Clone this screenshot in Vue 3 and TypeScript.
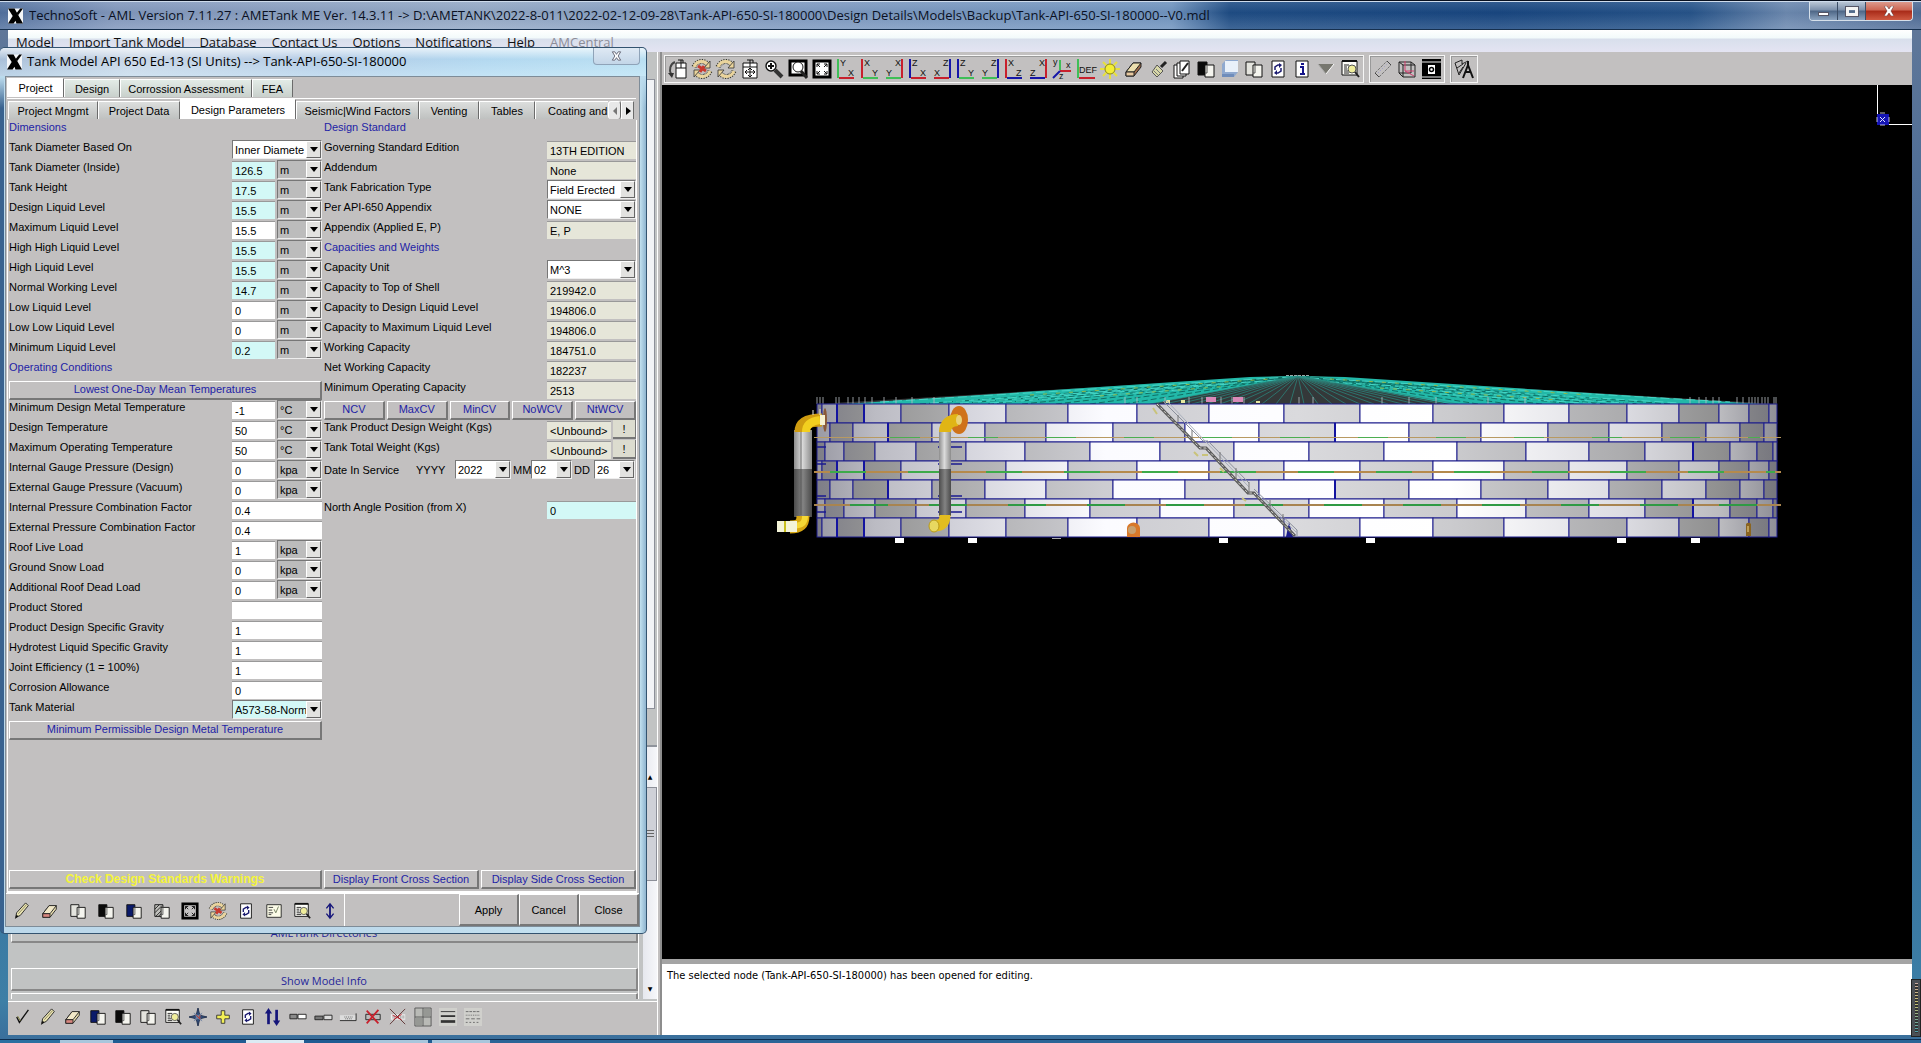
<script setup lang="ts">
interface Field {
  label: string
  value?: string
  kind: 'head' | 'unit' | 'text' | 'select' | 'button' | 'readonly' | 'unbound' | 'cv' | 'date' | 'gap'
  unit?: string
  tone?: 'aqua' | 'white'
}

const menu = ['Model', 'Import Tank Model', 'Database', 'Contact Us', 'Options', 'Notifications', 'Help']
const mainTabs = [
  { name: 'Project', w: 57 },
  { name: 'Design', w: 56 },
  { name: 'Corrossion Assessment', w: 132 },
  { name: 'FEA', w: 41 },
]
const subTabs = [
  { name: 'Project Mngmt', w: 90 },
  { name: 'Project Data', w: 82 },
  { name: 'Design Parameters', w: 116 },
  { name: 'Seismic|Wind Factors', w: 123 },
  { name: 'Venting', w: 60 },
  { name: 'Tables', w: 56 },
]

const unit = (label: string, value: string, u: string, tone: 'aqua' | 'white' = 'white'): Field => ({ label, value, kind: 'unit', unit: u, tone })
const text = (label: string, value: string, tone: 'aqua' | 'white' = 'white'): Field => ({ label, value, kind: 'text', tone })
const ro = (label: string, value: string): Field => ({ label, value, kind: 'readonly' })

const leftFields: Field[] = [
  { label: 'Dimensions', kind: 'head' },
  { label: 'Tank Diameter Based On', kind: 'select', value: 'Inner Diamete' },
  unit('Tank Diameter (Inside)', '126.5', 'm', 'aqua'),
  unit('Tank Height', '17.5', 'm', 'aqua'),
  unit('Design Liquid Level', '15.5', 'm', 'aqua'),
  unit('Maximum Liquid Level', '15.5', 'm'),
  unit('High High Liquid Level', '15.5', 'm', 'aqua'),
  unit('High Liquid Level', '15.5', 'm', 'aqua'),
  unit('Normal Working Level', '14.7', 'm', 'aqua'),
  unit('Low Liquid Level', '0', 'm'),
  unit('Low Low Liquid Level', '0', 'm'),
  unit('Minimum Liquid Level', '0.2', 'm', 'aqua'),
  { label: 'Operating Conditions', kind: 'head' },
  { label: 'Lowest One-Day Mean Temperatures', kind: 'button' },
  unit('Minimum Design Metal Temperature', '-1', '°C'),
  unit('Design Temperature', '50', '°C'),
  unit('Maximum Operating Temperature', '50', '°C'),
  unit('Internal Gauge Pressure (Design)', '0', 'kpa'),
  unit('External Gauge Pressure (Vacuum)', '0', 'kpa'),
  text('Internal Pressure Combination Factor', '0.4'),
  text('External Pressure Combination Factor', '0.4'),
  unit('Roof Live Load', '1', 'kpa'),
  unit('Ground Snow Load', '0', 'kpa'),
  unit('Additional Roof Dead Load', '0', 'kpa'),
  text('Product Stored', ''),
  text('Product Design Specific Gravity', '1'),
  text('Hydrotest Liquid Specific Gravity', '1'),
  text('Joint Efficiency (1 = 100%)', '1'),
  text('Corrosion Allowance', '0'),
  { label: 'Tank Material', kind: 'select', value: 'A573-58-Norm', tone: 'aqua' },
  { label: 'Minimum Permissible Design Metal Temperature', kind: 'button' },
]

const rightFields: Field[] = [
  { label: 'Design Standard', kind: 'head' },
  ro('Governing Standard Edition', '13TH EDITION'),
  ro('Addendum', 'None'),
  { label: 'Tank Fabrication Type', kind: 'select', value: 'Field Erected' },
  { label: 'Per API-650 Appendix', kind: 'select', value: 'NONE' },
  ro('Appendix (Applied E, P)', 'E, P'),
  { label: 'Capacities and Weights', kind: 'head' },
  { label: 'Capacity Unit', kind: 'select', value: 'M^3' },
  ro('Capacity to Top of Shell', '219942.0'),
  ro('Capacity to Design Liquid Level', '194806.0'),
  ro('Capacity to Maximum Liquid Level', '194806.0'),
  ro('Working Capacity', '184751.0'),
  ro('Net Working Capacity', '182237'),
  ro('Minimum Operating Capacity', '2513'),
  { label: 'cv', kind: 'cv' },
  { label: 'Tank Product Design Weight (Kgs)', kind: 'unbound' },
  { label: 'Tank Total Weight (Kgs)', kind: 'unbound' },
  { label: 'Date In Service', kind: 'date' },
  { label: 'gap', kind: 'gap' },
  text('North Angle Position (from X)', '0', 'aqua'),
]
const cvButtons = ['NCV', 'MaxCV', 'MinCV', 'NoWCV', 'NtWCV']

// ---- toolbar icons, drawn on a 20 x 20 grid ----
const R = '#c8202c'
const G = '#3fbf57'
const B = '#1616a8'
const glyph = (x: number, y: number, s: string, size = 9) =>
  `<text x="${x}" y="${y}" font-family="Liberation Sans, sans-serif" font-size="${size}" fill="#111">${s}</text>`
const axes = (v: string, h: string, top: string, bottom: string, mirror = false) =>
  mirror
    ? `<path d="M18 0V19" stroke="${v}" stroke-width="2"/><path d="M2 19H17" stroke="${h}" stroke-width="2"/>${glyph(11, 7, top)}${glyph(2, 17, bottom)}`
    : `<path d="M2 0V19" stroke="${v}" stroke-width="2"/><path d="M3 19H18" stroke="${h}" stroke-width="2"/>${glyph(4, 7, top)}${glyph(12, 17, bottom)}`
const pages = (back: string) =>
  `<path d="M2 3H11V16H2Z" fill="${back}" stroke="#111"/><path d="M9 6H18V18H9Z" fill="#f4f4ee" stroke="#111"/><path d="M11 6V14H9" fill="none" stroke="#555"/>`
const swirl = (mid: string) =>
  `<g fill="none" stroke="#3a3a2c" stroke-width="5" stroke-dasharray="1 1"><path d="M2 8C5 1 13 1 16 6"/><path d="M18 12C15 19 7 19 4 14"/></g><g fill="none" stroke="#ead49c" stroke-width="3"><path d="M2 8C5 1 13 1 16 6"/><path d="M18 12C15 19 7 19 4 14"/></g><path d="M18 2V9H12Z" fill="#ead49c" stroke="#333" stroke-width="0.8"/><path d="M2 18V11H8Z" fill="#ead49c" stroke="#333" stroke-width="0.8"/>${mid}`
const mouse = '<path d="M8 4H18V19H8Z" fill="#fff" stroke="#111"/><path d="M8 9H18M13 4V9M13 1V4M10 1H15V4" fill="none" stroke="#111"/>'
const arrows4 = '<path d="M5 8V5H8M5 5L8 8M15 8V5H12M15 5L12 8M5 12V15H8M5 15L8 12M15 12V15H12M15 15L12 12" fill="none" stroke="#111"/>'
const frame = (fill: string) => `<path d="M2 2H18V18H2Z" fill="${fill}" stroke="#000" stroke-width="3"/>${arrows4}`
const sheet = '<path d="M4 2H16V18H4Z" fill="#fff" stroke="#111"/>'

const icons: Record<string, string> = {
  mouseRotate: `${mouse}<path d="M7 3C2 5 1 11 3 15" fill="none" stroke="#444" stroke-width="2"/><path d="M0 14H6L4 19Z" fill="#333"/>`,
  swirlRed: swirl('<path d="M6 7L14 12M12 7L8 13" stroke="#c8392f" stroke-width="3"/>'),
  swirl: swirl(''),
  mousePan: '<path d="M3 4H17V19H3Z" fill="#fff" stroke="#111"/><path d="M3 8H17M10 4V8M10 1V4M7 1H13V4M10 9V18M5 13H15M8 11L10 9L12 11M8 16L10 18L12 16M7 11L5 13L7 15M13 11L15 13L13 15" fill="none" stroke="#111"/>',
  zoomIn: '<path d="M11 11L18 18" stroke="#333" stroke-width="4"/><circle cx="7" cy="7" r="5" fill="#fff" stroke="#111" stroke-width="1.4"/><path d="M4 7H10M7 4V10" stroke="#111" stroke-width="2"/>',
  zoomWin: '<path d="M2 2H18V16H2Z" fill="#fff" stroke="#000" stroke-width="3"/><circle cx="10" cy="8" r="5" fill="#fff" stroke="#111"/><path d="M13 12L19 19" stroke="#222" stroke-width="3"/>',
  fit: frame('#fff'),
  fitGrey: frame('#c4c2c2'),
  yx: axes(G, R, 'Y', 'X'),
  xy: axes(R, G, 'X', 'Y'),
  xyM: axes(R, G, 'X', 'Y', true),
  zx: axes(B, R, 'Z', 'X'),
  zxM: axes(B, R, 'Z', 'X', true),
  zy: axes(B, G, 'Z', 'Y'),
  zyM: axes(B, G, 'Z', 'Y', true),
  xz: axes(R, B, 'X', 'Z'),
  xzM: axes(R, B, 'X', 'Z', true),
  iso: `<path d="M8 1V11" stroke="${G}" stroke-width="2"/><path d="M8 12H19" stroke="${R}" stroke-width="2"/><path d="M8 12L1 19" stroke="${B}" stroke-width="2"/>${glyph(1, 6, 'y')}${glyph(14, 9, 'x')}${glyph(7, 20, 'z')}`,
  def: `<path d="M2 0V19" stroke="${G}" stroke-width="2"/><path d="M3 19H19" stroke="${R}" stroke-width="2"/>${glyph(3, 14, 'DEF', 9)}`,
  sun: '<path d="M10 0V20M0 10H20M3 3L17 17M17 3L3 17" stroke="#e6e040" stroke-width="2"/><circle cx="10" cy="10" r="5" fill="#f4ee35" stroke="#8a8420"/>',
  eraser: '<path d="M2 13L9 4H17V8L10 17H2Z" fill="#e6dcae" stroke="#222"/><path d="M9 4L17 4L10 13H2Z" fill="#f1e8c8" stroke="#222"/><path d="M2 13H10V17H2Z" fill="#d98880" stroke="#222"/>',
  eraserTan: '<path d="M2 13L9 4H17V8L10 17H2Z" fill="#a06c4a" stroke="#222"/><path d="M9 4L17 4L10 13H2Z" fill="#ecdfae" stroke="#222"/><path d="M2 13H10V17H2Z" fill="#e8c9a0" stroke="#222"/>',
  brush: '<path d="M18 3L13 8" stroke="#222" stroke-width="3"/><path d="M9 6L15 12L9 18L4 13Z" fill="#d8d8a8" stroke="#555"/><path d="M8 10L12 14M6 12L10 16" stroke="#777"/>',
  copies: '<path d="M2 6H11V19H2Z" fill="#fff" stroke="#111"/><path d="M5 4H14V17H5Z" fill="#fff" stroke="#111"/><path d="M8 2H17V15H8Z" fill="#fff" stroke="#111"/><path d="M16 4L10 12" stroke="#222" stroke-width="2"/>',
  pagesBlack: pages('#0a0a0a'),
  pagesBlue: pages('#0a1a6a'),
  pagesWhite: pages('#e4e4de'),
  pagesHatch: pages('#c0c0bc') + '<path d="M2 8L7 3M2 12L10 4M3 16L9 10M6 16L9 13" stroke="#222"/>',
  cube: '<path d="M2 5L6 1H18V13L14 18H2Z" fill="#8fa9cf"/><path d="M5 2H18V13H5Z" fill="#e9f1fa"/><path d="M2 15H14V18H2Z" fill="#6f8dbb"/>',
  refresh: `${sheet}<path d="M7 11V8L10 6H12M13 9V12L10 14H8" fill="none" stroke="#1a1a70" stroke-width="1.5"/><path d="M11 4L14 6L11 9ZM9 11L6 14L9 16Z" fill="#1a1a70"/>`,
  info: `${sheet}<path d="M8 8H11V15M8 15H13" fill="none" stroke="#14148a" stroke-width="2"/><path d="M9 4H12V6H9Z" fill="#14148a"/>`,
  tri: '<path d="M2 5H18L10 15Z" fill="#77776f"/><path d="M18 5L10 15" stroke="#fff"/><path d="M2 5L10 15" stroke="#aaa"/>',
  find: '<path d="M2 2H17V16H2Z" fill="#fdfdf8" stroke="#111"/><path d="M2 2H17" stroke="#111" stroke-width="2"/><path d="M4 6H9M4 8H7M4 10H7M4 12H8M4 14H9" stroke="#222"/><circle cx="12" cy="10" r="4" fill="#f0ee9c" stroke="#555"/><path d="M15 13L19 18" stroke="#222" stroke-width="2"/>',
  measure: '<path d="M2 14L14 2M6 18L18 6" stroke="#777" stroke-dasharray="3 1"/><path d="M2 14L6 18M14 2L18 6" stroke="#444"/><path d="M5 14L15 4" stroke="#9a9ac8" stroke-dasharray="1 2"/>',
  wire: '<path d="M2 3L6 6M14 3L18 6M2 14L6 18" stroke="#222"/><path d="M2 3H14V14H2Z" fill="none" stroke="#222"/><path d="M6 6H18V18H6Z" fill="none" stroke="#222"/><path d="M8 2V12H17M8 12L17 17" fill="none" stroke="#d04070"/>',
  camera: '<path d="M1 0H20V20H1Z" fill="#000"/><path d="M1 3H20M1 18H20" stroke="#eee"/><path d="M7 6H14V15H7Z" fill="#fff"/><circle cx="10.500" cy="10.500" r="2" fill="#fff" stroke="#000" stroke-width="1.5"/>',
  compass: '<path d="M1 4L8 1V5L14 2M1 4L5 16L12 4M3 9L9 5M5 14L9 8" fill="none" stroke="#222"/><path d="M14 2V6M14 6L9 19M14 6L19 19M11 13H17" fill="none" stroke="#111" stroke-width="2"/>',
  pencil: '<path d="M3 17L4 12L14 1L17 4L8 15Z" fill="#e9e3b0" stroke="#222"/><path d="M6 13L15 3" stroke="#8b8660"/><path d="M2 19L4 14L6 16Z" fill="#111"/>',
  check: '<path d="M3 10L6 16L16 2" fill="none" stroke="#111" stroke-width="1.500"/><path d="M4 9L7 14" stroke="#7a7a30"/>',
  script: '<path d="M2 3H18V17H2Z" fill="#fcfce8" stroke="#222"/><path d="M4 6H9M4 9H8M4 12H9M4 14H7" stroke="#333"/><path d="M10 8L12 12L15 5" fill="none" stroke="#6d7a5a"/>',
  updown: '<path d="M10 3V17" stroke="#15157a" stroke-width="2"/><path d="M6 7L10 2L14 7M6 13L10 18L14 13" fill="none" stroke="#15157a" stroke-width="1.5"/>',
  star: '<path d="M10 0L12 8L20 10L12 12L10 20L8 12L0 10L8 8Z" fill="#33507e" stroke="#1c2a48"/><path d="M5 5L10 8L15 5L12 10L15 15L10 12L5 15L8 10Z" fill="#6d7fa0"/><path d="M8 8L12 12M12 8V12" stroke="#c0392b"/>',
  plus: '<path d="M8 3H12V8H17V12H12V17H8V12H3V8H8Z" fill="#f2ef56" stroke="#333"/>',
  swap: '<path d="M5 4V18" stroke="#15157a" stroke-width="3"/><path d="M1 6L5 0L9 6Z" fill="#15157a"/><path d="M14 2V15" stroke="#15157a" stroke-width="3"/><path d="M10 14L14 20L18 14Z" fill="#15157a"/>',
  barA: '<path d="M1 7H9V12H1Z" fill="#8a8a8a" stroke="#222"/><path d="M10 7H19V12H10Z" fill="#fff" stroke="#222"/>',
  barB: '<path d="M1 9H10V13H1Z" fill="#777" stroke="#222"/><path d="M11 8H20V13H11Z" fill="#ddd" stroke="#222"/>',
  barC: '<path d="M1 8H19V14H1Z" fill="#ddd"/><path d="M19 6V14H1" fill="none" stroke="#222"/><path d="M6 10H16M7 12H15" stroke="#555" stroke-dasharray="1 1"/>',
  barX: '<path d="M2 7H18V13H2Z" fill="#bbb" stroke="#222"/><path d="M3 3L16 17M16 2L3 17" stroke="#c8202c" stroke-width="2"/>',
  barXX: '<path d="M2 7H18V13H2Z" fill="#eee"/><path d="M4 9H17M4 11H17" stroke="#555" stroke-dasharray="1 1"/><path d="M1 1L18 18M18 1L1 18" stroke="#5a3030"/><path d="M4 8L14 13M14 7L5 13" stroke="#c8202c"/>',
  grid: '<path d="M1 0H19V20H1Z" fill="#b9bab6" stroke="#555"/><path d="M10 0V20M1 10H19" stroke="#555"/><path d="M11 1H18V9H11ZM2 11H9V19H2Z" fill="#969894"/>',
  lines: '<path d="M0 0H20V20H0Z" fill="#d0d0cc"/><path d="M2 4H18" stroke="#333"/><path d="M2 9H18" stroke="#333" stroke-width="2"/><path d="M2 15H18" stroke="#333" stroke-width="3"/>',
  dashes: '<path d="M0 0H20V20H0Z" fill="#d0d0cc"/><path d="M2 4H18" stroke="#666" stroke-dasharray="3 1"/><path d="M2 8H18" stroke="#666" stroke-dasharray="1 1"/><path d="M2 12H18" stroke="#666" stroke-dasharray="4 2"/><path d="M2 16H18" stroke="#666" stroke-dasharray="2 2"/>',
}

const viewTools = ['mouseRotate', 'swirlRed', 'swirl', 'mousePan', 'zoomIn', 'zoomWin', 'fit', 'yx', 'xy', 'xyM', 'zx', 'zxM', 'zy', 'zyM', 'xz', 'xzM', 'iso', 'def', 'sun', 'eraserTan', 'brush', 'copies', 'pagesBlack', 'cube', 'pagesWhite', 'refresh', 'info', 'tri', 'find']
const viewTools2 = ['measure', 'wire', 'camera']
const dialogTools = ['pencil', 'eraser', 'pagesWhite', 'pagesBlack', 'pagesBlue', 'pagesHatch', 'fitGrey', 'swirlRed', 'refresh', 'script', 'find', 'updown']
const paneTools = ['check', 'pencil', 'eraser', 'pagesBlue', 'pagesBlack', 'pagesWhite', 'find', 'star', 'plus', 'refresh', 'swap', 'barA', 'barB', 'barC', 'barX', 'barXX', 'grid', 'lines', 'dashes']

// ---- tank model ----
const jointsA = [817, 822, 837, 864, 901, 949, 1006, 1068, 1137, 1209, 1284, 1360, 1433, 1504, 1569, 1627, 1679, 1719, 1749, 1769, 1777]
const jointsB = [817, 830, 853, 888, 932, 985, 1046, 1113, 1185, 1259, 1335, 1409, 1481, 1548, 1609, 1662, 1706, 1740, 1764, 1777]
const jointsC = [817, 825, 844, 875, 916, 966, 1025, 1090, 1160, 1234, 1309, 1384, 1457, 1526, 1589, 1645, 1693, 1730, 1757, 1773, 1777]
const courses: [number[], number][] = [[jointsA, 0], [jointsB, 1], [jointsC, 0], [jointsA, 1], [jointsB, 0], [jointsC, 1], [jointsA, 0]]
const plates = courses.flatMap(([j, parity], row) =>
  j.slice(0, -1).map((x, i) => ({ x, y: 404 + row * 19, w: j[i + 1] - x, fill: (i + parity) % 2 ? 'url(#plateLight)' : 'url(#plateDark)' })),
)
const roofRays = Array.from({ length: 23 }, (_, i) => 1150 + i * 14)
const roofRings = Array.from({ length: 7 }, (_, i) => i)
const posts = [817, 820, 823, 836, 839, 848, 853, 859, 865, 872, 884, 896, 912, 934, 1125, 1137, 1165, 1189, 1202, 1221, 1232, 1244, 1299, 1313, 1382, 1409, 1436, 1488, 1525, 1690, 1699, 1706, 1713, 1719, 1737, 1743, 1749, 1752, 1755, 1758, 1762, 1765, 1768, 1774, 1776]
const feet = [895, 968, 1219, 1366, 1617, 1691]
const rungs = [447, 464, 496, 512]
</script>

<template>
  <div class="desktop">
    <div class="app">
      <header class="titlebar">
        <svg class="logo" viewBox="0 0 16 16" aria-hidden="true"><path d="M0 0H16V16H0Z" fill="#f4f6f8" /><path d="M0 0H7L16 16H9L8 13L6 16H0L5 8Z" fill="#000" /><path d="M13 0H16L11 7L9 5Z" fill="#000" /></svg>
        <h1>TechnoSoft - AML Version 7.11.27 : AMETank ME Ver. 14.3.11 -&gt; D:\AMETANK\2022-8-011\2022-02-12-09-28\Tank-API-650-SI-180000\Design Details\Models\Backup\Tank-API-650-SI-180000--V0.mdl</h1>
        <div class="wincontrols">
          <button type="button" class="wc min" aria-label="Minimize"><i></i></button>
          <button type="button" class="wc max" aria-label="Maximize"><i></i></button>
          <button type="button" class="wc close" aria-label="Close window"><svg viewBox="0 0 10 10"><path d="M0 0H3L5 3L7 0H10L7 5L10 10H7L5 7L3 10H0L3 5Z" fill="#fff" stroke="#522" stroke-width="0.5" /></svg></button>
        </div>
      </header>

      <nav class="menubar">
        <a v-for="m in menu" :key="m" href="#">{{ m }}</a>
        <a href="#" class="off">AMCentral</a>
      </nav>

      <div class="body">
        <section class="pane">
          <div class="upper"><div class="track"></div></div>
          <div class="lower">
            <div class="list">
              <button type="button" class="wide">AMETank Directories</button>
              <button type="button" class="wide info">Show Model Info</button>
              <div class="stub"></div>
            </div>
            <div class="scroll">
              <span class="arr">▲</span>
              <div class="thumb"><i></i></div>
              <span class="arr down">▼</span>
            </div>
          </div>
          <div class="panetools">
            <button v-for="(n, i) in paneTools" :key="i" type="button" class="tool" :aria-label="n"><svg viewBox="0 0 20 20" v-html="icons[n]"></svg></button>
          </div>
        </section>

        <section class="work">
          <div class="toolbars">
            <div class="group">
              <button v-for="(n, i) in viewTools" :key="i" type="button" class="tool" :aria-label="n"><svg viewBox="0 0 20 20" v-html="icons[n]"></svg></button>
            </div>
            <div class="group">
              <button v-for="n in viewTools2" :key="n" type="button" class="tool" :aria-label="n"><svg viewBox="0 0 20 20" v-html="icons[n]"></svg></button>
            </div>
            <div class="group">
              <button type="button" class="tool" aria-label="compass"><svg viewBox="0 0 20 20" v-html="icons.compass"></svg></button>
            </div>
          </div>

          <div class="viewport">
            <svg class="model" viewBox="662 85 1250 874" role="img" aria-label="Tank model, side view">
              <defs>
                <linearGradient id="plateLight" gradientUnits="userSpaceOnUse" x1="817" y1="0" x2="1777" y2="0">
                  <stop offset="0" stop-color="#9a9aa4" /><stop offset="0.06" stop-color="#bbbbc3" /><stop offset="0.16" stop-color="#d6d6de" /><stop offset="0.3" stop-color="#fbfbff" /><stop offset="0.66" stop-color="#ffffff" /><stop offset="0.84" stop-color="#dcdce2" /><stop offset="0.94" stop-color="#bcbcc0" /><stop offset="1" stop-color="#8e8e96" />
                </linearGradient>
                <linearGradient id="plateDark" gradientUnits="userSpaceOnUse" x1="817" y1="0" x2="1777" y2="0">
                  <stop offset="0" stop-color="#7e7e88" /><stop offset="0.06" stop-color="#949494" /><stop offset="0.16" stop-color="#b0b0b2" /><stop offset="0.3" stop-color="#cdcdd2" /><stop offset="0.5" stop-color="#dadadd" /><stop offset="0.66" stop-color="#cbcbce" /><stop offset="0.84" stop-color="#acacae" /><stop offset="0.94" stop-color="#909090" /><stop offset="1" stop-color="#76767e" />
                </linearGradient>
                <linearGradient id="pipeUp"><stop offset="0" stop-color="#8d8d8d" /><stop offset="0.45" stop-color="#dcdcdc" /><stop offset="1" stop-color="#8b8b8b" /></linearGradient>
                <linearGradient id="pipeLow"><stop offset="0" stop-color="#4c4c4c" /><stop offset="0.5" stop-color="#838383" /><stop offset="1" stop-color="#4a4a4a" /></linearGradient>
              </defs>

              <polygon points="817,404 1284,376 1312,376 1777,404" fill="#343839" />
              <polygon points="845,404 1250,377 1298,376 1150,404" fill="#22b8a8" />
              <polygon points="1298,376 1345,377 1760,404 1450,404" fill="#22b8a8" />
              <g stroke="#0f6f64" stroke-width="1" fill="none">
                <path v-for="r in roofRings" :key="'l' + r" :d="`M${920 + r * 34} 404L1290 377`" stroke-dasharray="6 3" />
                <path v-for="r in roofRings" :key="'r' + r" :d="`M${1670 - r * 32} 404L1306 377`" stroke-dasharray="6 3" />
              </g>
              <g stroke="#45d6c6" fill="none">
                <path d="M880 402L1290 377M930 403L1280 380M960 403L1230 384M990 403L1180 390" stroke-dasharray="9 4" />
                <path d="M1310 378L1730 402M1330 382L1680 403M1390 388L1640 404M1440 394L1600 404" stroke-dasharray="9 4" />
              </g>
              <path d="M1030 395L1270 379M1330 379L1590 395M1100 396L1230 386M1380 388L1560 400" stroke="#8fb84a" stroke-dasharray="4 9" />
              <path v-for="x in roofRays" :key="x" :d="`M1298 376L${x} 404`" stroke="#2b8d82" stroke-width="0.7" />
              <path d="M1286 375.500H1310" stroke="#9aa" stroke-dasharray="3 1" />
              <path v-for="x in posts" :key="'p' + x" :d="`M${x} 397V404`" stroke="#b9bfc4" stroke-width="0.8" />
              <path d="M1206 397h10v5h-10zM1233 397h10v5h-10z" fill="#d98ab8" />
              <path d="M1166 400h4v3h-4zM1181 400h4v3h-4zM1256 401h4v2h-4z" fill="#e6e8a0" />

              <rect v-for="(p, i) in plates" :key="i" :x="p.x" :y="p.y" :width="p.w" height="19" :fill="p.fill" stroke="#1c1c8c" stroke-width="1" />
              <path d="M837 404V423M864 404V423M888 423V442M837 461V480M864 461V480M888 480V499M1335 423V442M1335 480V499M1693 442V461M1693 499V518M837 518V537M864 518V537" stroke="#1414a0" stroke-width="2" />
              <path d="M814 437.500H1781" stroke="#b89a62" /><path d="M890 437.500H1760" stroke="#4cae50" stroke-dasharray="30 48" />
              <path d="M814 472H1781" stroke="#b58a4c" stroke-width="2" /><path d="M830 472H1775" stroke="#3daa4a" stroke-width="2" stroke-dasharray="36 42" />
              <path d="M814 505H1781" stroke="#a88450" stroke-width="2" /><path d="M850 505H1775" stroke="#2f9a44" stroke-width="2" stroke-dasharray="38 41" />
              <path v-for="y in rungs" :key="y" :d="`M817 ${y}H826M938 ${y}H962`" stroke="#1a1a90" stroke-width="1.500" />

              <ellipse cx="825" cy="420" rx="2" ry="12" fill="#8a5a38" />
              <rect x="794" y="430" width="18" height="40" fill="url(#pipeUp)" />
              <rect x="794" y="469" width="18" height="48" fill="url(#pipeLow)" />
              <path d="M801 432C801 424 806 420 822 420" stroke="#cf9c10" stroke-width="13" fill="none" />
              <path d="M806 432C806 425 811 421 820 420" stroke="#f2cf1f" stroke-width="8" fill="none" />
              <path d="M803 516C803 524 800 527 790 527" stroke="#d8a712" stroke-width="13" fill="none" />
              <path d="M805 516C805 524 801 526 790 526" stroke="#f5d836" stroke-width="6" fill="none" />
              <path d="M777 521h20v11h-20z" fill="#f4f4d8" /><path d="M785 521V532" stroke="#c8c020" stroke-width="2" />
              <path d="M820 415h5v10h-5z" fill="#f7f2cf" /><path d="M813 410V415M820 409V415" stroke="#e8e8d8" />
              <path d="M801 432V515" stroke="#555" stroke-width="0.8" />

              <ellipse cx="959" cy="420" rx="9" ry="14" fill="#cf721a" />
              <rect x="939" y="430" width="12" height="40" fill="url(#pipeUp)" />
              <rect x="939" y="469" width="12" height="47" fill="url(#pipeLow)" />
              <path d="M945 432C945 424 950 420 958 420" stroke="#e0b515" stroke-width="12" fill="none" />
              <ellipse cx="959" cy="420" rx="3" ry="5" fill="#e9d27a" />
              <path d="M945 515C945 523 941 526 934 526" stroke="#e3bd20" stroke-width="11" fill="none" />
              <ellipse cx="934" cy="526" rx="5" ry="6" fill="#e8d860" stroke="#b89a18" />

              <path d="M1127 537V528A6 5 0 0 1 1140 528V537Z" fill="#d8782a" /><circle cx="1132" cy="530" r="4" fill="#c8a070" />
              <path d="M1746 524a3 3 0 0 1 5 0V536H1746Z" fill="#8a6420" /><path d="M1748 526V532" stroke="#f0d890" />
              <path d="M1286 537L1289 522L1293 537Z" fill="#1a1a8a" />

              <g fill="none">
                <path d="M1157 404L1200 448H1206L1248 493H1254L1295 536" stroke="#5c5c5c" stroke-width="3" />
                <path d="M1157 404L1200 448H1206L1248 493H1254L1295 536" stroke="#d5d5cf" stroke-width="1" stroke-dasharray="3 2" />
                <path d="M1163 401L1203 441H1208L1249 483M1254 489L1297 530V537" stroke="#8a8f9c" />
                <path d="M1166 400L1206 442L1249 487M1256 493L1297 533" stroke="#a9b0bc" />
                <path d="M1249 482V494M1178 415V422M1192 430V438M1220 452V463M1236 468V480M1270 500V510M1283 514V524" stroke="#777" />
                <path d="M1153 408l4 6M1194 452l4 4M1202 455l6 0M1220 468l4 4M1242 498l4 3" stroke="#c9c37a" stroke-width="2" />
              </g>
              <path v-for="x in feet" :key="'f' + x" :d="`M${x} 538h9v5h-9z`" fill="#fff" />
              <path d="M1052 538.500H1061" stroke="#aaa" />

              <path d="M1877.500 85V114M1889 124.500H1912" stroke="#fff" />
              <path d="M1877 114h12v11h-12z" fill="#1414b4" />
              <path d="M1880 117l5 5M1885 117l-5 5" stroke="#dfe4ff" /><path d="M1880 113h5M1880 125h5M1877 117v5M1889 117v5" stroke="#e8e8ff" stroke-width="0.8" />
            </svg>
          </div>
          <output class="log">The selected node (Tank-API-650-SI-180000) has been opened for editing.</output>
        </section>
      </div>
      <div class="meter" aria-hidden="true"><i></i></div>

      <form class="dialog" @submit.prevent>
        <header class="dtitle">
          <svg class="logo" viewBox="0 0 16 16" aria-hidden="true"><path d="M0 0H16V16H0Z" fill="#f4f6f8" /><path d="M0 0H7L16 16H9L8 13L6 16H0L5 8Z" fill="#000" /><path d="M13 0H16L11 7L9 5Z" fill="#000" /></svg>
          <h2>Tank Model API 650 Ed-13 (SI Units) --&gt; Tank-API-650-SI-180000</h2>
          <button type="button" class="dclose" aria-label="Close dialog"><svg viewBox="0 0 12 12"><path d="M1 1H4L6 4L8 1H11L8 6L11 11H8L6 8L4 11H1L4 6Z" fill="#fff" stroke="#556" /></svg></button>
        </header>

        <div class="dbody">
          <div class="tabs main">
            <button v-for="t in mainTabs" :key="t.name" type="button" :class="{ on: t.name === 'Project' }" :style="{ width: t.w + 'px' }">{{ t.name }}</button>
          </div>
          <div class="tabs sub">
            <button v-for="t in subTabs" :key="t.name" type="button" :class="{ on: t.name === 'Design Parameters' }" :style="{ width: t.w + 'px' }">{{ t.name }}</button>
            <button type="button" class="last">Coating and</button>
            <button type="button" class="spin dim" aria-label="Scroll tabs left"><svg viewBox="0 0 6 8"><path d="M5 0V8L1 4Z" fill="#777" /></svg></button>
            <button type="button" class="spin" aria-label="Scroll tabs right"><svg viewBox="0 0 6 8"><path d="M1 0V8L6 4Z" fill="#000" /></svg></button>
          </div>

          <div class="panel">
            <div class="cols">
              <div v-for="(list, c) in [leftFields, rightFields]" :key="c" class="col">
                <div v-for="(f, i) in list" :key="i" class="row">
                  <h3 v-if="f.kind === 'head'">{{ f.label }}</h3>
                  <button v-else-if="f.kind === 'button'" type="button" class="raised">{{ f.label }}</button>
                  <template v-else-if="f.kind === 'cv'">
                    <button v-for="b in cvButtons" :key="b" type="button" class="raised">{{ b }}</button>
                  </template>
                  <template v-else-if="f.kind === 'date'">
                    <span class="dl service">{{ f.label }}</span>
                    <label class="dl yyyy" for="yyyy">YYYY</label>
                    <span class="combo year"><select id="yyyy"><option>2022</option></select><i></i></span>
                    <label class="dl mm" for="mm">MM</label>
                    <span class="combo day"><select id="mm"><option>02</option></select><i></i></span>
                    <label class="dl dd" for="dd">DD</label>
                    <span class="combo day"><select id="dd"><option>26</option></select><i></i></span>
                  </template>
                  <template v-else-if="f.kind !== 'gap'">
                    <label :for="`f${c}-${i}`">{{ f.label }}</label>
                    <span v-if="f.kind === 'select'" class="combo" :class="f.tone"><select :id="`f${c}-${i}`"><option>{{ f.value }}</option></select><i></i></span>
                    <template v-else-if="f.kind === 'unit'">
                      <input :id="`f${c}-${i}`" :class="f.tone" class="narrow" type="text" :value="f.value" />
                      <span class="combo unit"><select :aria-label="f.label + ' unit'"><option>{{ f.unit }}</option></select><i></i></span>
                    </template>
                    <template v-else-if="f.kind === 'unbound'">
                      <input :id="`f${c}-${i}`" class="ro" type="text" value="&lt;Unbound&gt;" readonly />
                      <button type="button" class="bang">!</button>
                    </template>
                    <input v-else :id="`f${c}-${i}`" :class="f.kind === 'readonly' ? 'ro' : f.tone" type="text" :value="f.value" :readonly="f.kind === 'readonly'" />
                  </template>
                </div>
              </div>
            </div>
            <div class="checks">
              <button type="button" class="raised warn">Check Design Standards Warnings</button>
              <button type="button" class="raised">Display Front Cross Section</button>
              <button type="button" class="raised">Display Side Cross Section</button>
            </div>
          </div>

          <footer class="dfoot">
            <div class="dtools">
              <button v-for="(n, i) in dialogTools" :key="i" type="button" class="tool" :aria-label="n"><svg viewBox="0 0 20 20" v-html="icons[n]"></svg></button>
            </div>
            <button type="button" class="cmd">Apply</button>
            <button type="button" class="cmd">Cancel</button>
            <button type="button" class="cmd">Close</button>
          </footer>
        </div>
      </form>
    </div>
  </div>
</template>

<style>
body {
  margin: 0;
  background: #0c2444;
}
</style>

<style scoped>
* {
  box-sizing: border-box;
}
.desktop {
  height: 100vh;
  overflow: hidden;
  padding-bottom: 3px;
  background: linear-gradient(to right, #2a6fa0 0 60px, #a8c6dc 60px 113px, #1f5c92 113px 246px, #dcebf4 246px 304px, #1f5c92 304px 370px, #a8c6dc 370px 428px, #1f5c92 428px 432px, #a8c6dc 432px 490px, #2a6496 490px);
  color: #000;
  font: 11px/14px 'Liberation Sans', Arial, sans-serif;
}
button,
input,
select {
  margin: 0;
  padding: 0;
  border: 0;
  border-radius: 0;
  background: none;
  color: inherit;
  font: inherit;
  outline: 0;
}
h1,
h2,
h3 {
  margin: 0;
  font-weight: 400;
}
.app {
  position: relative;
  display: flex;
  flex-direction: column;
  height: 100%;
  padding: 0 9px 4px 8px;
  border-top: 1px solid #08101f;
  border-bottom: 1px solid #0d2d50;
  background: linear-gradient(#5f7799 0, #5f7799 30px, #2f5d92 500px, #3d7fa6 1000px, #3a6f9c);
}
.titlebar {
  display: flex;
  flex: none;
  height: 29px;
  margin: 0 -9px 0 -8px;
  padding: 0 8px;
  border-top: 1px solid #cfdcec;
  border-bottom: 1px solid #16304f;
  background: linear-gradient(rgba(255, 255, 255, 0.1), rgba(0, 0, 0, 0.03) 40%, rgba(255, 255, 255, 0.14)), linear-gradient(to right, #52719f, #8298bd 6%, #94a9c6 25%, #7f9ac0 40%, #7094bf 61%, #1f4d85 64%, #194781 78%, #27548a 88%, #6c89b0 93%, #4f6c96);
}
.logo {
  flex: none;
  width: 15px;
  height: 16px;
}
.titlebar .logo {
  margin: 6px 6px 0 0;
}
h1 {
  flex: 1;
  overflow: hidden;
  color: #0a1022;
  font: 13px/26px 'Open Sans', 'Noto Sans', sans-serif;
  white-space: nowrap;
}
.wincontrols {
  display: flex;
  height: 19px;
  border: 1px solid #d6e0ea;
  border-top: 0;
  border-radius: 0 0 4px 4px;
  overflow: hidden;
}
.wc {
  display: grid;
  place-items: center;
  width: 28px;
  border-right: 1px solid #3b4d66;
  background: linear-gradient(#b9c6d6, #7c90ab 45%, #4d6686 50%, #8ba3bf);
}
.wc.min i {
  width: 11px;
  height: 4px;
  margin-top: 5px;
  border: 1px solid #556;
  background: #fff;
}
.wc.max i {
  width: 12px;
  height: 9px;
  border: 3px solid #f4f4f4;
  outline: 1px solid #556;
}
.wc.close {
  width: 46px;
  border-right: 0;
  background: linear-gradient(#dc9a8c, #cc6552 45%, #a82a18 50%, #cf5a42);
}
.wc.close svg {
  width: 10px;
  height: 10px;
}
.menubar {
  display: flex;
  flex: none;
  gap: 15px;
  height: 22px;
  padding: 1px 8px 0;
  background: linear-gradient(#fff 0, #f2fafb 8px, #d8dfec 9px, #e4e4f2);
  font: 13px/22px 'Open Sans', 'Noto Sans', sans-serif;
}
.menubar a {
  color: #111;
  text-decoration: none;
}
.menubar a.off {
  color: #8d8d98;
}
.body {
  display: flex;
  flex: 1;
  min-height: 0;
  background: #c2c0c0;
}
.pane {
  display: flex;
  flex: none;
  flex-direction: column;
  width: 650px;
  border-right: 1px solid #fff;
  background: #c1c3c3;
}
.upper {
  display: flex;
  flex: 1;
  justify-content: flex-end;
  padding: 27px 2px 36px 0;
}
.track {
  width: 14px;
  border: 1px solid #8c8f98;
  background: #f2f3f6;
}
.lower {
  display: flex;
  height: 254px;
  padding-left: 3px;
  border-top: 2px solid #8f949c;
}
.list {
  display: flex;
  flex: 1;
  flex-direction: column;
  justify-content: flex-end;
  overflow: hidden;
}
.wide {
  flex: none;
  height: 23px;
  margin-bottom: 25px;
  padding-top: 3px;
  border: 1px solid #fff;
  border-right: 2px solid #888;
  border-bottom: 2px solid #888;
  color: #26269a;
  font: 11px/16px 'Open Sans', 'Noto Sans', sans-serif;
}
.wide.info {
  margin-bottom: 2px;
}
.stub {
  height: 6px;
  border: 1px solid #fff;
  border-right: 2px solid #888;
  border-bottom: 0;
}
.scroll {
  display: flex;
  flex-direction: column;
  width: 19px;
  padding-left: 4px;
  border-left: 1px solid #fff;
  background: linear-gradient(to right, #c1c3c3 4px, #e6e8ee 4px, #f6f7fa);
}
.arr {
  height: 40px;
  padding-top: 24px;
  font: 6px/12px 'DejaVu Sans', sans-serif;
  text-align: center;
}
.arr.down {
  height: 16px;
  margin-top: auto;
  padding: 0;
}
.thumb {
  display: grid;
  place-items: center;
  height: 94px;
  border: 1px solid #8c8f98;
  background: #cfd1d8;
}
.thumb i {
  width: 7px;
  height: 8px;
  background: repeating-linear-gradient(#666 0 1px, transparent 1px 3px);
}
.panetools {
  display: flex;
  align-items: center;
  height: 34px;
  margin-top: 2px;
  padding: 0 0 4px 2px;
  border-top: 1px solid #fff;
  background: #c2c0c0;
}
.tool {
  display: grid;
  flex: none;
  place-items: center;
  width: 24px;
  height: 26px;
}
.tool svg {
  width: 20px;
  height: 20px;
  overflow: visible;
}
.panetools .tool {
  width: 25px;
}
.panetools .tool svg,
.dtools .tool svg {
  width: 18px;
  height: 18px;
}
.work {
  display: flex;
  flex: 1;
  flex-direction: column;
  min-width: 0;
  margin-left: 2px;
  border-left: 2px solid #8d8d8d;
}
.toolbars {
  display: flex;
  flex: none;
  gap: 5px;
  height: 33px;
  padding: 3px 2px 2px;
  background: #c2c0c0;
}
.group {
  display: flex;
  padding: 0 1px;
  border: 1px solid #f6f6f6;
  box-shadow: 1px 1px 0 #999 inset;
}
.viewport {
  flex: 1;
  min-height: 0;
  background: #000;
}
.model {
  display: block;
  width: 100%;
  height: 100%;
}
.log {
  flex: none;
  height: 76px;
  padding: 4px 5px;
  border-top: 5px solid #a4a4a4;
  background: #fff;
  font: 11px/16px 'DejaVu Sans Condensed', 'Open Sans', sans-serif;
}
.meter {
  position: absolute;
  right: 0;
  bottom: 2px;
  display: grid;
  place-items: center;
  width: 10px;
  height: 58px;
  border: 1px solid #222;
  background: #4b4f55;
}
.meter i {
  width: 3px;
  height: 50px;
  background: repeating-linear-gradient(transparent 0 1px, #333 1px 3px), linear-gradient(#c9a9a0, #c8c070 40%, #49a0b0);
}

.dialog {
  position: absolute;
  top: 46px;
  bottom: 105px;
  left: 0;
  display: flex;
  flex-direction: column;
  width: 647px;
  padding: 0 6px 6px 5px;
  border: 1px solid #33536f;
  border-left: 0;
  border-radius: 5px;
  background: linear-gradient(#dce9f5 0, #a9c7e2 14px, #bcdcee 29px, rgba(190, 225, 240, 0) 60px), linear-gradient(to right, #39628f 0 4px, #bcd8ea 4px 50%, #c6e4f2 99%, #8fb4cf);
}
.dtitle {
  display: flex;
  flex: none;
  height: 28px;
  margin: 0 -6px 0 -5px;
  padding-left: 7px;
  border-radius: 5px 5px 0 0;
  background: linear-gradient(rgba(255, 255, 255, 0.7), rgba(255, 255, 255, 0) 40%, rgba(220, 245, 255, 0.4)), linear-gradient(to right, #a9bfd8, #c9d6e6 20%, #b4cce6 50%, #b3d8f0 75%, #b9dff2);
}
.dtitle .logo {
  margin: 6px 5px 0 0;
}
h2 {
  flex: 1;
  font: 13px/26px 'Open Sans', 'Noto Sans', sans-serif;
}
.dclose {
  display: grid;
  place-items: center;
  width: 47px;
  height: 17px;
  margin-right: 6px;
  border: 1px solid #8fa3b8;
  border-top: 0;
  border-radius: 0 0 4px 4px;
  background: linear-gradient(#dfe9f4, #c3d6e8);
}
.dclose svg {
  width: 11px;
  height: 10px;
}
.dbody {
  display: flex;
  flex: 1;
  flex-direction: column;
  min-height: 0;
  border: 1px solid #7e8c98;
  background: #c2c0c0;
}
.tabs {
  display: flex;
  flex: none;
  align-items: flex-end;
}
.tabs button {
  height: 18px;
  border: 1px solid #fff;
  border-right-color: #6b6b6b;
  border-bottom: 0;
  background: linear-gradient(#e2ebe6, #c9d0cc);
  line-height: 16px;
  white-space: nowrap;
}
.tabs .on {
  background: #fff;
}
.tabs.main {
  height: 20px;
  padding-left: 1px;
}
.tabs.main .on {
  height: 19px;
}
.tabs.sub {
  height: 22px;
  margin: 1px 3px 0 1px;
  padding: 0 0 1px 1px;
  border-top: 1px solid #fff;
}
.tabs.sub button {
  background: linear-gradient(#dcdedd, #bfc1c0);
}
.tabs.sub .on {
  height: 20px;
  background: #fff;
}
.tabs.sub .last {
  width: 73px;
  padding-left: 12px;
  border-right: 0;
  text-align: left;
}
.tabs.sub .spin {
  width: 13px;
  background: #e8e8e8;
}
.tabs.sub .spin.dim {
  border-radius: 3px;
}
.spin svg {
  width: 6px;
  height: 8px;
}
.panel {
  display: flex;
  flex: 1;
  flex-direction: column;
  min-height: 0;
  margin: 0 2px 0 1px;
  padding: 0 0 2px 1px;
  border: 1px solid #fff;
  border-width: 0 1px 2px;
}
.cols {
  display: grid;
  flex: 1;
  grid-template-columns: 313px minmax(0, 1fr);
  column-gap: 2px;
}
.row {
  display: flex;
  height: 20px;
  gap: 2px;
}
.row > label {
  flex: none;
  width: 221px;
  white-space: nowrap;
}
h3 {
  color: #1e1ea6;
  font-size: 11px;
  line-height: 14px;
}
.row input {
  flex: 1;
  min-width: 0;
  height: 18px;
  margin-top: 1px;
  padding: 0 3px;
  border-top: 1px solid #999;
  background: #fff;
}
.row input.narrow {
  flex: none;
  width: 43px;
}
.row .aqua,
.combo.aqua select {
  background: #d3f8f6;
}
.row input.ro {
  background: #e6e6d9;
}
.combo {
  display: grid;
  flex: 1;
  height: 19px;
  min-width: 0;
  border: 1px solid #8a8a8a;
  border-color: #777 #eee #eee #777;
}
.combo select {
  grid-area: 1 / 1;
  width: 100%;
  min-width: 0;
  padding: 0 15px 0 2px;
  overflow: hidden;
  background: #fff;
  appearance: none;
}
.combo i {
  display: grid;
  grid-area: 1 / 1;
  place-items: center;
  justify-self: end;
  width: 15px;
  border: 1px solid #fff;
  border-right-color: #666;
  border-bottom-color: #666;
  background: #e2e2e0;
  pointer-events: none;
}
.combo i::before {
  width: 0;
  border: 4px solid transparent;
  border-top: 5px solid #000;
  border-bottom: 0;
  content: '';
}
.combo.unit select {
  background: #bcbcbc;
}
.row > .dl {
  width: auto;
  padding-top: 3px;
}
.row > .service {
  width: 90px;
}
.row > .yyyy {
  width: 37px;
}
.row > .mm {
  width: 16px;
}
.row > .dd {
  width: 18px;
}
.combo.year {
  flex: none;
  width: 56px;
}
.combo.day {
  flex: none;
  width: 41px;
}
.raised {
  flex: 1;
  height: 19px;
  border: 1px solid #fff;
  border-right: 2px solid #777;
  border-bottom: 2px solid #777;
  background: #c2c0c0;
  color: #1e1ea6;
  line-height: 15px;
  white-space: nowrap;
}
.row > .raised {
  align-self: center;
}
.bang {
  width: 23px;
  height: 19px;
  border-right: 1px solid #777;
  border-bottom: 2px solid #777;
  background: #dcdccf;
}
.checks {
  display: grid;
  grid-template-columns: 313px 1fr 1fr;
  gap: 2px;
}
.raised.warn {
  color: #f4f43a;
  font-weight: 700;
  font-size: 12px;
}
.dfoot {
  display: flex;
  flex: none;
  height: 33px;
  border-top: 1px solid #fff;
}
.dtools {
  display: flex;
  flex: none;
  align-items: center;
  width: 339px;
  padding: 2px 0 0 2px;
  border-right: 1px solid #fff;
}
.dtools .tool {
  width: 28px;
}
.cmd {
  width: 60px;
  border: 1px solid #fff;
  border-right: 2px solid #777;
  border-bottom: 2px solid #777;
}
.dtools + .cmd {
  margin-left: auto;
}
</style>
